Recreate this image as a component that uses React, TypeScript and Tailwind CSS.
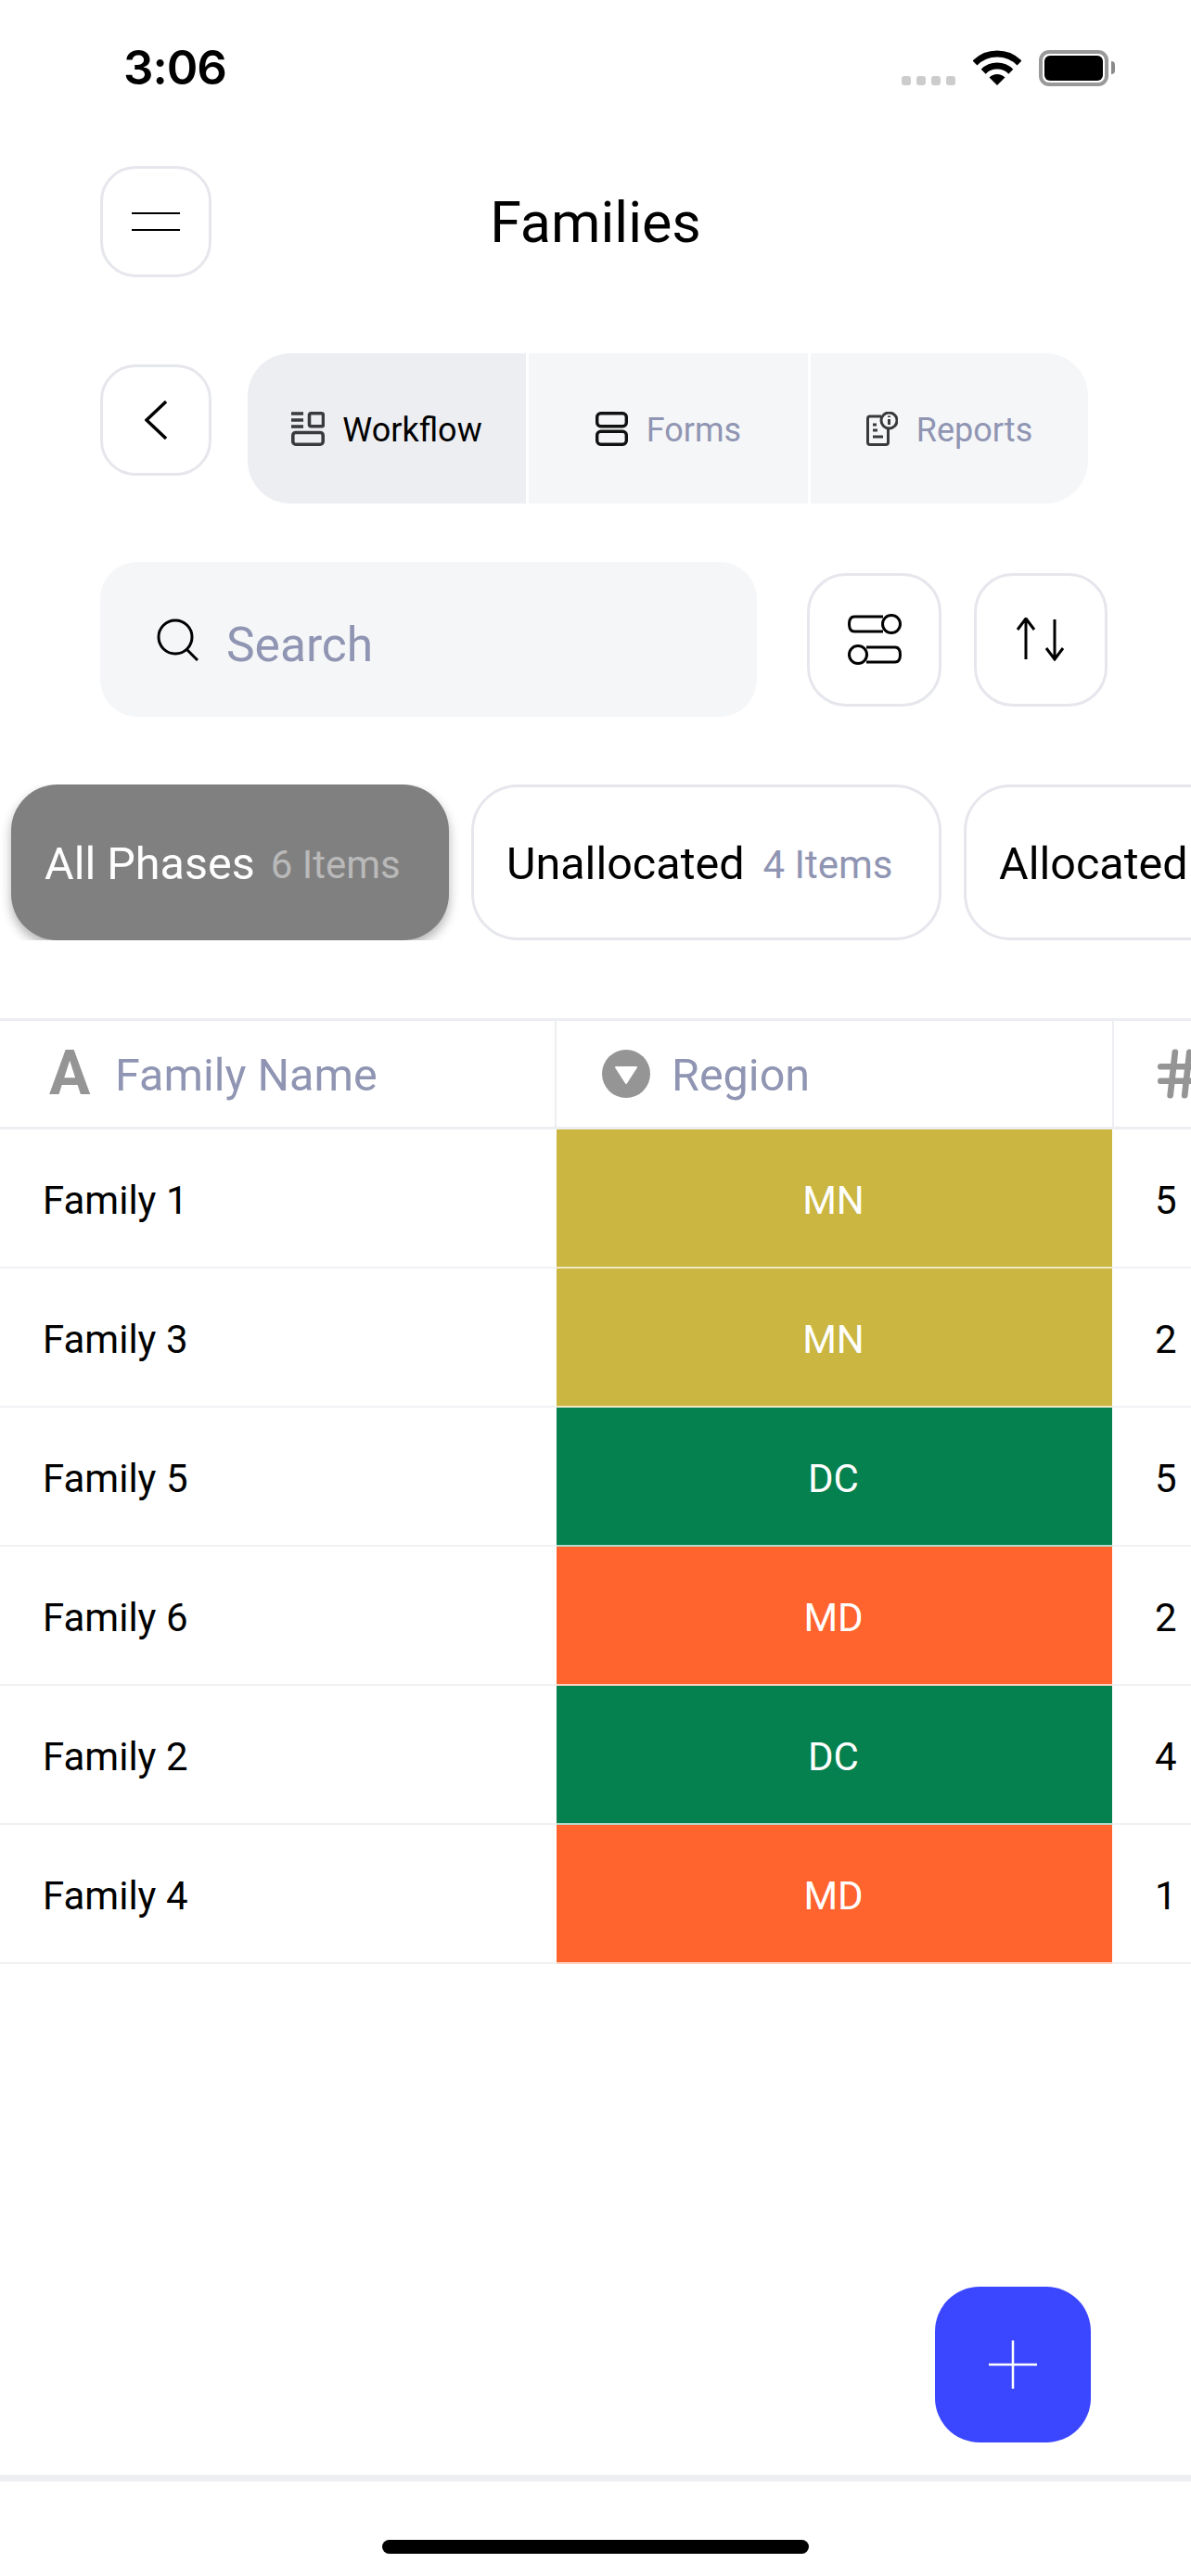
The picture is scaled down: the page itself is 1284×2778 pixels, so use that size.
import { Hash } from "lucide-react";

const phases = [
  { label: "All Phases", count: "6 Items", active: true, width: "w-[472px]" },
  { label: "Unallocated", count: "4 Items", active: false, width: "w-[507px]" },
  { label: "Allocated", count: "", active: false, width: "w-[440px]" },
];

const families = [
  { name: "Family 1", region: "MN", count: 5, color: "bg-[#cab640]" },
  { name: "Family 3", region: "MN", count: 2, color: "bg-[#cab640]" },
  { name: "Family 5", region: "DC", count: 5, color: "bg-[#04814e]" },
  { name: "Family 6", region: "MD", count: 2, color: "bg-[#ff642e]" },
  { name: "Family 2", region: "DC", count: 4, color: "bg-[#04814e]" },
  { name: "Family 4", region: "MD", count: 1, color: "bg-[#ff642e]" },
];

const StatusBar = () => (
  <div className="flex h-[146px] items-center justify-between pl-[133px] pr-[82px]">
    <span className="font-['Inter',sans-serif] text-[51px] font-semibold tracking-[-1px] text-black">3:06</span>
    <div className="flex items-start">
      <div className="mt-[28px] flex gap-[6px]">
        <span className="h-[10px] w-[10px] rounded-[3px] bg-[#cccccc]" />
        <span className="h-[10px] w-[10px] rounded-[3px] bg-[#cccccc]" />
        <span className="h-[10px] w-[10px] rounded-[3px] bg-[#cccccc]" />
        <span className="h-[10px] w-[10px] rounded-[3px] bg-[#cccccc]" />
      </div>
      <svg className="ml-[19px]" width="52" height="38" viewBox="0 0 52 38" fill="none">
        <path d="M2 14A34 34 0 0 1 50 14" stroke="#000" strokeWidth="7" />
        <path d="M11.2 23.2A21 21 0 0 1 40.8 23.2" stroke="#000" strokeWidth="7" />
        <path d="M26 38L17.5 29.5A12 12 0 0 1 34.5 29.5Z" fill="#000" />
      </svg>
      <div className="ml-[19px] flex items-center">
        <div className="h-[39px] w-[75px] rounded-[11px] border-[4px] border-[#999999] p-[2px]">
          <div className="h-full w-full rounded-[6px] bg-black" />
        </div>
        <span className="ml-[3px] h-[14px] w-[4px] rounded-r-[4px] bg-[#8a8a8a]" />
      </div>
    </div>
  </div>
);

const IconButton = ({ className, children }: { className: string; children: React.ReactNode }) => (
  <div className={`flex items-center justify-center border-[3px] border-[#e6e7ed] bg-white ${className}`}>{children}</div>
);

const App = () => {
  return (
    <div className="relative flex h-[2778px] w-full flex-col overflow-hidden bg-white font-['Roboto',sans-serif]">
      <StatusBar />

      {/* titre */}
      <div className="mt-[33px] grid h-[119px] grid-cols-[1fr_auto_1fr] items-center">
        <div className="pl-[108px]">
          <IconButton className="h-[120px] w-[120px] rounded-[38px]">
            <svg width="52" height="20" viewBox="0 0 52 20" fill="none" stroke="#000" strokeWidth="2">
              <path d="M0 1H52M0 19H52" />
            </svg>
          </IconButton>
        </div>
        <h1 className="pt-[3px] text-[61px] font-normal leading-none text-black">Families</h1>
        <div />
      </div>

      {/* onglets */}
      <div className="mt-[83px] flex items-start pl-[108px]">
        <IconButton className="mt-[12px] h-[120px] w-[120px] rounded-[38px]">
          <svg width="24" height="42" viewBox="0 0 24 42" fill="none" stroke="#000" strokeWidth="3.4">
            <path d="M23 1L2 21L23 41" />
          </svg>
        </IconButton>
        <div className="ml-[39px] flex h-[162px] w-[906px] gap-[3px] overflow-hidden rounded-[46px] text-[36px]">
          <div className="flex w-[300px] items-center justify-center gap-[19px] bg-[#edeef2] text-black">
            <svg width="36" height="37" viewBox="0 0 36 37" fill="none" stroke="#3a3a3c" strokeWidth="3.6">
              <path d="M0 2H13M0 9H13M0 16H13" />
              <rect x="19.5" y="1.8" width="15" height="14" rx="2" />
              <rect x="1.8" y="22.5" width="32.4" height="12.7" rx="3" />
            </svg>
            <span className="pt-[3px]">Workflow</span>
          </div>
          <div className="flex w-[301px] items-center justify-center gap-[20px] bg-[#f5f6f8] text-[#8f95b2]">
            <svg width="35" height="37" viewBox="0 0 35 37" fill="none" stroke="#111" strokeWidth="3.4">
              <rect x="1.7" y="1.7" width="31.6" height="14" rx="4" />
              <rect x="1.7" y="21.3" width="31.6" height="14" rx="4" />
            </svg>
            <span className="pt-[3px]">Forms</span>
          </div>
          <div className="flex flex-1 items-center justify-center gap-[20px] bg-[#f5f6f8] text-[#8f95b2]">
            <svg width="34" height="37" viewBox="0 0 34 37" fill="none" stroke="#3a3a3c" strokeWidth="3">
              <path d="M16 5H4Q1.5 5 1.5 7.5V33Q1.5 35.5 4 35.5H21Q23.5 35.5 23.5 33V19" />
              <circle cx="24.5" cy="9.5" r="8.5" />
              <path d="M24.5 8V14M24.5 4.5V6M7 14H11M7 20H12M7 27H18" />
            </svg>
            <span className="pt-[3px]">Reports</span>
          </div>
        </div>
      </div>

      {/* recherche */}
      <div className="mt-[63px] flex items-center pl-[108px]">
        <div className="flex h-[167px] w-[708px] items-center rounded-[40px] bg-[#f5f6f8] pl-[61px]">
          <svg width="45" height="46" viewBox="0 0 45 46" fill="none" stroke="#000" strokeWidth="3">
            <circle cx="20" cy="20" r="18" />
            <path d="M32 33L44 45" />
          </svg>
          <span className="ml-[30px] pt-[13px] text-[51.5px] text-[#8f95b2]">Search</span>
        </div>
        <IconButton className="ml-[54px] h-[144px] w-[145px] rounded-[42px]">
          <svg width="58" height="57" viewBox="0 0 58 57" fill="none" stroke="#000" strokeWidth="3">
            <path d="M38 4H7Q1.5 4 1.5 12Q1.5 20 7 20H38" />
            <circle cx="47" cy="12" r="9.5" />
            <path d="M20 37H51Q56.5 37 56.5 45Q56.5 53 51 53H20" />
            <circle cx="11" cy="45" r="9.5" />
          </svg>
        </IconButton>
        <IconButton className="ml-[35px] h-[144px] w-[144px] rounded-[42px]">
          <svg width="52" height="47" viewBox="0 0 52 47" fill="none" stroke="#000" strokeWidth="3">
            <path d="M10 45V1M1 13L10 1L19 13M41 2V45M32 33L41 45L50 33" />
          </svg>
        </IconButton>
      </div>

      {/* phases */}
      <div className="mt-[73px] flex gap-[24px] overflow-hidden pl-[12px]">
        {phases.map((phase) => (
          <div
            key={phase.label}
            className={`flex h-[168px] shrink-0 items-center justify-start rounded-[50px] pt-[5px] ${phase.width} ${
              phase.active
                ? "gap-[17px] bg-[#808080] pl-[36px] text-white shadow-[0_6px_12px_rgba(0,0,0,0.3)]"
                : "gap-[20px] border-[3px] border-[#e6e7ed] bg-white pl-[35px] text-black"
            }`}
          >
            <span className="text-[48.5px]">{phase.label}</span>
            {phase.count && (
              <span className={`text-[42px] ${phase.active ? "text-[#b9b9b9]" : "text-[#8f95b2]"}`}>{phase.count}</span>
            )}
          </div>
        ))}
      </div>

      {/* tableau */}
      <div className="mt-[84px] overflow-hidden border-t-[3px] border-[#edeef2]">
        <div className="grid h-[117px] w-[1400px] grid-cols-[600px_601px_199px] border-b-[3px] border-[#edeef2] text-[48.5px] text-[#8f95b2]">
          <div className="flex items-center border-r-2 border-[#edeef2] pl-[53px]">
            <span className="w-[71px] text-[66px] font-bold leading-none text-[#959595]">A</span>
            <span className="pt-[5px]">Family Name</span>
          </div>
          <div className="flex items-center border-r-2 border-[#edeef2] pl-[49px]">
            <svg width="52" height="52" viewBox="0 0 52 52">
              <circle cx="26" cy="26" r="26" fill="#959595" />
              <path d="M15 19H37L26 36Z" fill="#fff" stroke="#fff" strokeWidth="2" strokeLinejoin="round" />
            </svg>
            <span className="ml-[23px] pt-[5px]">Region</span>
          </div>
          <div className="flex items-center pl-[40px]">
            <Hash size={62} strokeWidth={2.6} color="#959595" />
          </div>
        </div>
        {families.map((family) => (
          <div key={family.name} className="grid h-[150px] w-[1400px] grid-cols-[600px_599px_201px] text-[42px] text-black">
            <div className="flex items-center border-b-2 border-[#f0f1f4] pl-[46px] pt-[5px]">{family.name}</div>
            <div className={`flex items-center justify-center border-b-2 border-white/70 pt-[5px] pr-[2px] text-white ${family.color}`}>{family.region}</div>
            <div className="flex items-center border-b-2 border-[#f0f1f4] pl-[46px] pt-[5px]">{family.count}</div>
          </div>
        ))}
      </div>

      <div className="absolute bottom-[144px] right-[108px] flex h-[168px] w-[168px] items-center justify-center rounded-[48px] bg-[#3b47ff]">
        <svg width="52" height="52" viewBox="0 0 52 52" stroke="#fff" strokeWidth="2.5">
          <path d="M26 0V52M0 26H52" />
        </svg>
      </div>

      {/* barre du bas */}
      <div className="mt-auto flex h-[109px] justify-center border-t-[7px] border-[#edeef2] pt-[63px]">
        <div className="h-[15px] w-[460px] rounded-full bg-black" />
      </div>
    </div>
  );
};

export default App;
